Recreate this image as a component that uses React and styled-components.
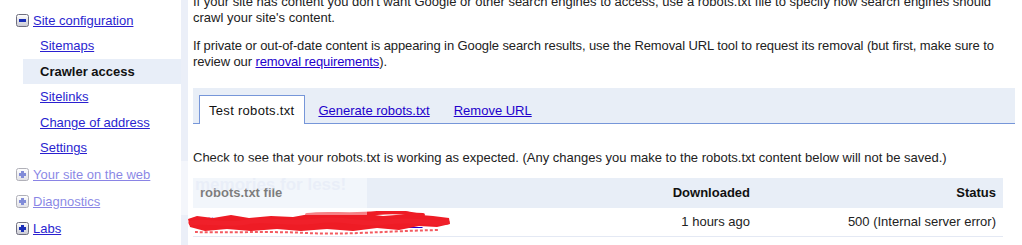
import React from "react";
import styled, { createGlobalStyle } from "styled-components";

const GlobalStyle = createGlobalStyle`
  html, body {
    margin: 0;
    padding: 0;
    background: #fff;
    overflow: hidden;
  }
  body {
    font-family: "Liberation Sans", Arial, sans-serif;
    font-size: 13px;
    color: #222;
  }
`;

const navItems = [
  { label: "Sitemaps" },
  { label: "Crawler access", active: true },
  { label: "Sitelinks" },
  { label: "Change of address" },
  { label: "Settings" },
];

const sections = ["Your site on the web", "Diagnostics", "Labs"];

const ToggleIcon = ({ open }) => (
  <svg width="13" height="13" viewBox="0 0 13 13">
    <defs>
      <linearGradient id="tg" x1="0" y1="0" x2="0" y2="1">
        <stop offset="0" stopColor="#ffffff" />
        <stop offset="1" stopColor="#c9c9d2" />
      </linearGradient>
    </defs>
    <rect x="0.5" y="0.5" width="12" height="12" rx="2" fill="url(#tg)" stroke="#6f6f7e" />
    <rect x="3" y="5" width="7" height="3" fill="#1a2fb8" />
    {!open && <rect x="5" y="3" width="3" height="7" fill="#1a2fb8" />}
  </svg>
);

const App = () => {
  return (
    <>
      <GlobalStyle />
      <Page>
        <Sidebar>
          <Section>
            <SectionHead>
              <ToggleIcon open />
              <NavLink href="#">Site configuration</NavLink>
            </SectionHead>
            {navItems.map((item) => (
              <SubItem key={item.label} $active={item.active}>
                {item.active ? <Current>{item.label}</Current> : <NavLink href="#">{item.label}</NavLink>}
              </SubItem>
            ))}
          </Section>
          {sections.map((s) => (
            <SectionRow key={s}>
              <ToggleIcon />
              <NavLink href="#">{s}</NavLink>
            </SectionRow>
          ))}
        </Sidebar>
        <Divider />
        <Main>
          <Para $top>
            If your site has content you don't want Google or other search engines to access, use a robots.txt file to
            specify how search engines should crawl your site's content.
          </Para>
          <Para $tight>
            If private or out-of-date content is appearing in Google search results, use the Removal URL tool to request
            its removal (but first, make sure to review our <Link href="#">removal requirements</Link>).
          </Para>
          <TabBar>
            <Tab $active>Test robots.txt</Tab>
            <Tab>
              <Link href="#">Generate robots.txt</Link>
            </Tab>
            <Tab>
              <Link href="#">Remove URL</Link>
            </Tab>
          </TabBar>
          <Para $check>
            Check to see that your robots.txt is working as expected. (Any changes you make to the robots.txt content
            below will not be saved.)
          </Para>
          <Table>
            <thead>
              <tr>
                <Th $left>robots.txt file</Th>
                <Th>Downloaded</Th>
                <Th $last>Status</Th>
              </tr>
            </thead>
            <tbody>
              <tr>
                <Td $left>
                  <Redacted>
                    <Link href="#">http://www.example-site.com/robots.txt</Link>
                    <Scribble viewBox="0 0 264 26" preserveAspectRatio="none">
                      <path
                        d="M1 8 L10 5 L26 7 L44 4 L62 7 L84 5 L106 6 L128 2 L150 5 L172 2 L196 5 L222 3 L246 5 L262 7
                           L263 13 L250 16 L232 15 L212 19 L190 17 L166 20 L140 18 L114 20 L90 18 L64 20 L40 18 L18 20 L3 16 Z"
                        fill="#ee1c25"
                      />
                      <path
                        d="M4 12 C20 9, 40 15, 60 11 S100 14, 130 10 S170 15, 200 11 S240 14, 260 11"
                        stroke="#f0202a"
                        strokeWidth="5"
                        fill="none"
                        strokeLinecap="round"
                      />
                      <path
                        d="M120 4 C140 1, 160 5, 190 2 S220 4, 236 4"
                        stroke="#ee1c25"
                        strokeWidth="4"
                        fill="none"
                        strokeLinecap="round"
                      />
                      <path
                        d="M8 21 C40 22, 80 20, 120 22 S200 20, 252 19"
                        stroke="#f45a60"
                        strokeWidth="2"
                        fill="none"
                        strokeDasharray="3 2"
                      />
                    </Scribble>
                  </Redacted>
                </Td>
                <Td>1 hours ago</Td>
                <Td $last>500 (Internal server error)</Td>
              </tr>
            </tbody>
          </Table>
        </Main>
        <Watermark>
          <span>memories for less!</span>
        </Watermark>
      </Page>
    </>
  );
};

const Page = styled.div`
  position: relative;
  display: flex;
  width: 1022px;
  height: 245px;
  overflow: hidden;
`;

const Sidebar = styled.div`
  width: 181px;
  flex-shrink: 0;
  padding-top: 7px;
`;

const Section = styled.div`
  display: flex;
  flex-direction: column;
`;

const SectionHead = styled.div`
  display: flex;
  align-items: center;
  gap: 4px;
  height: 26px;
  padding-left: 16px;
`;

const SectionRow = styled(SectionHead)`
  height: 27px;
`;

const SubItem = styled.div`
  display: flex;
  align-items: center;
  height: 25.5px;
  margin-left: 23px;
  padding-left: 17px;
  background: ${(p) => (p.$active ? "#e8eef8" : "transparent")};
`;

const NavLink = styled.a`
  color: #2a1fd0;
  text-decoration: underline;
  font-size: 13px;
`;

const Current = styled.span`
  color: #111;
  font-weight: bold;
  font-size: 13px;
`;

const Divider = styled.div`
  width: 7px;
  flex-shrink: 0;
  background: #ebeff8;
`;

const Main = styled.div`
  width: 822px;
  padding-left: 5px;
  line-height: 16px;
`;

const Para = styled.p`
  margin: ${(p) => (p.$top ? "-6px 0 12px" : p.$check ? "26px 0 12px" : "0 0 18px")};
  letter-spacing: ${(p) => (p.$tight ? "-0.1px" : "normal")};
  color: #222;
`;

const Link = styled.a`
  color: #2200cc;
  text-decoration: underline;
`;

const TabBar = styled.div`
  display: flex;
  align-items: flex-end;
  height: 36px;
  padding-left: 6px;
  background: #e8eef7;
  border-bottom: 1px solid #7696d9;
  box-sizing: border-box;
`;

const Tab = styled.div`
  height: ${(p) => (p.$active ? "29px" : "28px")};
  display: flex;
  align-items: center;
  padding: ${(p) => (p.$active ? "1px 10px 0 9px" : "1px 10px 0 12px")};
  margin-bottom: -1px;
  box-sizing: border-box;
  color: #111;
  letter-spacing: ${(p) => (p.$active ? "0.3px" : "normal")};
  background: ${(p) => (p.$active ? "#fff" : "transparent")};
  border: 1px solid ${(p) => (p.$active ? "#7696d9" : "transparent")};
  border-bottom: none;
`;

const Table = styled.table`
  width: 810px;
  border-collapse: collapse;
`;

const Th = styled.th`
  height: 30px;
  padding: 0 7px 0 7px;
  background: #e8eef7;
  text-align: ${(p) => (p.$left ? "left" : "right")};
  font-size: 13px;
  font-weight: bold;
  color: #111;
  width: ${(p) => (p.$left ? "auto" : p.$last ? "232px" : "200px")};
`;

const Td = styled.td`
  height: 28px;
  padding: 0 7px 0 7px;
  text-align: ${(p) => (p.$left ? "left" : "right")};
  border-bottom: 1px solid #e4e9f4;
  color: #222;
`;

const Redacted = styled.span`
  position: relative;
  display: inline-block;
  line-height: 16px;
`;

const Scribble = styled.svg`
  position: absolute;
  left: -13px;
  top: -3px;
  width: 264px;
  height: 26px;
`;

const Watermark = styled.div`
  position: absolute;
  left: 0;
  top: 161px;
  width: 367px;
  height: 54px;
  background: rgba(255, 255, 255, 0.45);
  pointer-events: none;

  span {
    position: absolute;
    left: 195px;
    top: 14px;
    font-size: 17px;
    font-weight: bold;
    color: rgba(226, 232, 246, 0.55);
  }
`;

export default App;
